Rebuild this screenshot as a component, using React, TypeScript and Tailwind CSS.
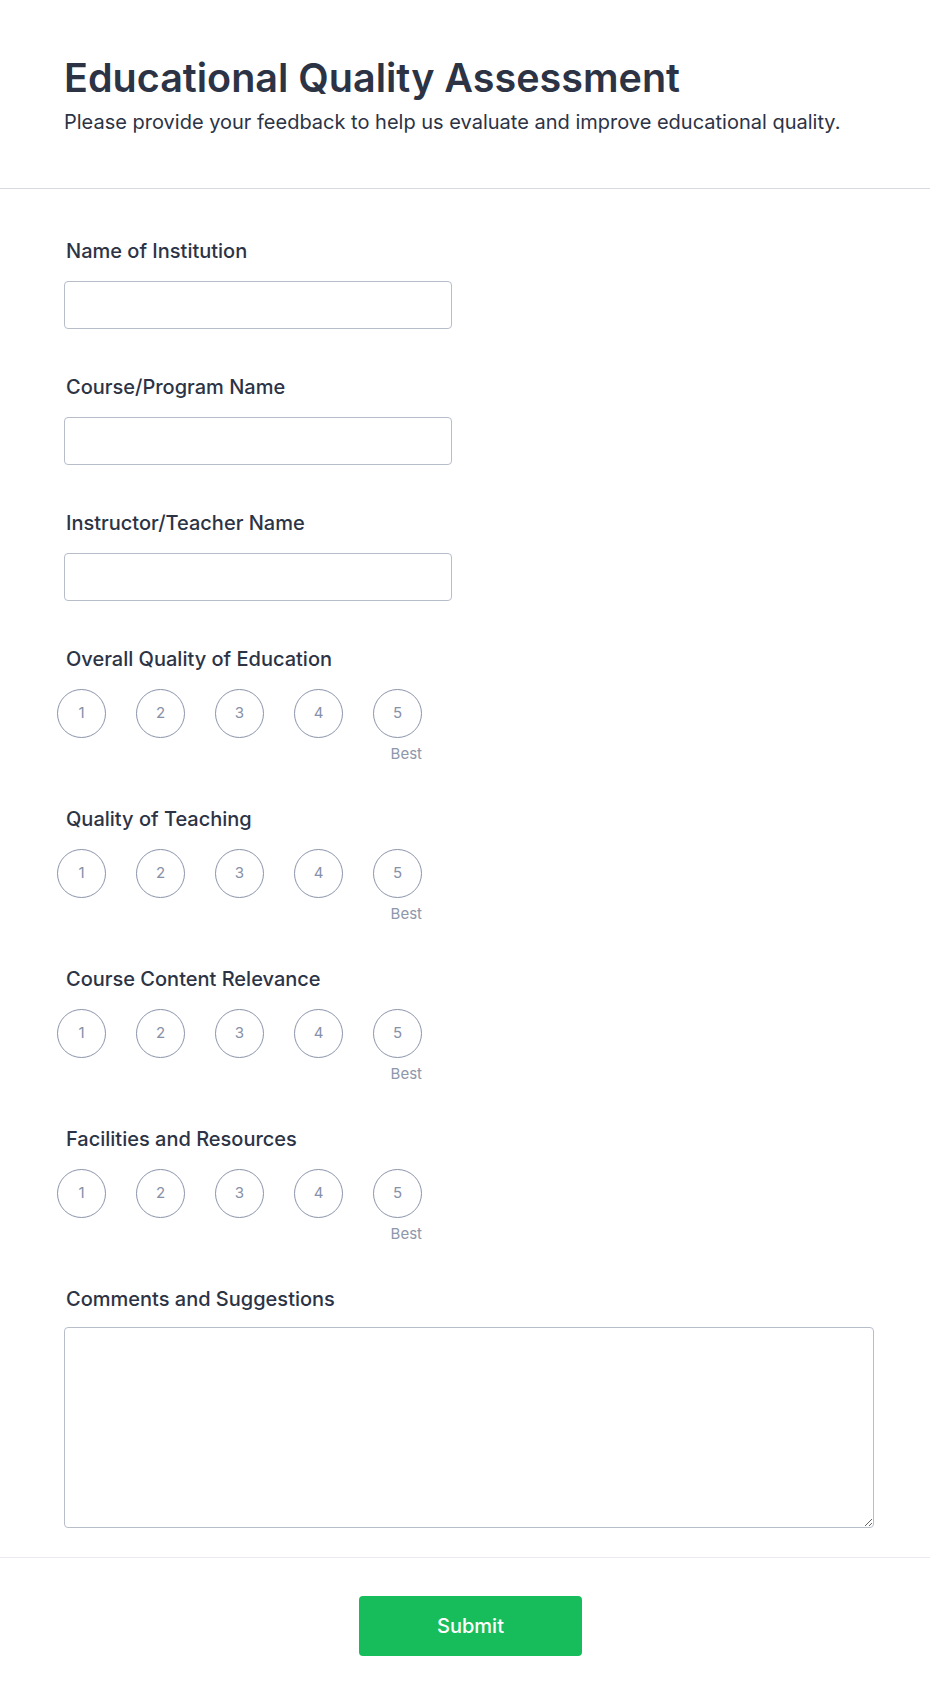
import React from "react";

const textFields = ["Name of Institution", "Course/Program Name", "Instructor/Teacher Name"];
const ratingFields = [
  "Overall Quality of Education",
  "Quality of Teaching",
  "Course Content Relevance",
  "Facilities and Resources",
];

function FieldLabel({ children }: { children: React.ReactNode }) {
  return (
    <label className="block pl-[2px] text-[20px] leading-[28px] font-medium text-[#2c3345]">
      {children}
    </label>
  );
}

function RatingRow({ label }: { label: string }) {
  return (
    <div className="h-[160px]">
      <FieldLabel>{label}</FieldLabel>
      <div className="mt-[16px] ml-[-7px] flex gap-[30px]">
        {[1, 2, 3, 4, 5].map((n) => (
          <div key={n} className="flex w-[49px] flex-col items-end">
            <button
              type="button"
              className="flex h-[49px] w-[49px] items-center justify-center rounded-full border border-[#8a94ab] bg-white text-[15px] text-[#8690a6]"
            >
              {n}
            </button>
            {n === 5 && (
              <span className="mt-[6px] text-[15px] leading-[20px] text-[#8d96ab]">Best</span>
            )}
          </div>
        ))}
      </div>
    </div>
  );
}

export default function App() {
  return (
    <div className="min-h-[1705px] bg-white font-['Inter',sans-serif]">
      <header className="border-b border-[#d8dae3] px-[64px] pt-[54px] pb-[52px]">
        <h1 className="text-[39.5px] leading-[48px] font-semibold text-[#2c3345]">
          Educational Quality Assessment
        </h1>
        <p className="mt-[6px] text-[20px] leading-[28px] text-[#2c3345]">
          Please provide your feedback to help us evaluate and improve educational quality.
        </p>
      </header>

      <main className="px-[64px] pt-[48px]">
        {textFields.map((label) => (
          <div key={label} className="h-[136px]">
            <FieldLabel>{label}</FieldLabel>
            <input
              type="text"
              className="mt-[16px] block h-[48px] w-[388px] rounded-[4px] border border-[#b8bdca] bg-white px-3"
            />
          </div>
        ))}

        {ratingFields.map((label) => (
          <RatingRow key={label} label={label} />
        ))}

        <div>
          <FieldLabel>Comments and Suggestions</FieldLabel>
          <textarea className="mt-[14px] block h-[201px] w-[810px] rounded-[4px] border border-[#b8bdca] bg-white p-3" />
        </div>
      </main>

      <footer className="mt-[29px] border-t border-[#e9ebf0] pt-[38px] pb-[49px]">
        <div className="flex justify-center pl-[11px]">
          <button
            type="button"
            className="h-[60px] w-[223px] rounded-[4px] bg-[#18bd5b] text-[20px] font-medium text-white"
          >
            Submit
          </button>
        </div>
      </footer>
    </div>
  );
}
